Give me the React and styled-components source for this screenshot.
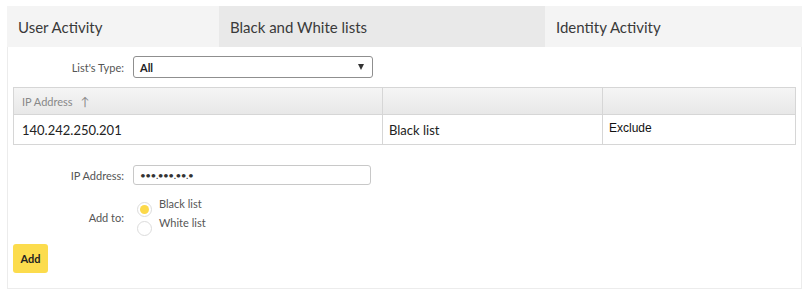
import React from "react";
import styled, { createGlobalStyle } from "styled-components";

const Global = createGlobalStyle`
  html, body { margin: 0; padding: 0; background: #fff; }
  body { font-family: Lato, "Noto Sans", sans-serif; }
  *, *::before, *::after { box-sizing: border-box; }
`;

const Page = styled.div`
  padding: 6px 4px 0 7px;
  width: 806px;
`;

const Tabs = styled.div`
  display: grid;
  grid-template-columns: 212px 326px 1fr;
  height: 41px;
`;

const Tab = styled.div`
  display: flex;
  align-items: center;
  padding-left: 11px;
  background: ${(p) => (p.$active ? "#e9e9e9" : "#f4f4f4")};
  color: #3a3a3a;
  font-size: 15px;
`;

const Panel = styled.div`
  border: 1px solid #ececec;
  border-top: none;
  padding: 9px 5px 15px 5px;
`;

const FieldRow = styled.div`
  display: grid;
  grid-template-columns: 111px 1fr;
  column-gap: 9px;
  align-items: center;
  margin-top: ${(p) => p.$mt || 0}px;
`;

const Label = styled.label`
  text-align: right;
  font-size: 11px;
  color: #555;
`;

const Select = styled.div`
  width: 240px;
  height: 22px;
  border: 1px solid #8f8f8f;
  border-radius: 3px;
  display: flex;
  align-items: center;
  justify-content: space-between;
  padding: 0 6px;
  font-size: 11px;
  font-weight: bold;
  color: #222;
`;

const Caret = styled.span`
  width: 0;
  height: 0;
  border-left: 3.5px solid transparent;
  border-right: 3.5px solid transparent;
  border-top: 6px solid #333;
  margin-right: 2px;
`;

const Table = styled.div`
  margin-top: 9px;
  border: 1px solid #d6d6d6;
  display: grid;
  grid-template-columns: 368px 220px 1fr;
`;

const HeadCell = styled.div`
  height: 27px;
  display: flex;
  align-items: center;
  padding-left: 8px;
  background: linear-gradient(#f5f5f5, #e8e8e8);
  border-left: ${(p) => (p.$first ? "none" : "1px solid #d6d6d6")};
  border-bottom: 1px solid #d6d6d6;
  font-size: 11px;
  color: #888;
  gap: 8px;
`;

const Arrow = styled.span`
  font-size: 12px;
`;

const Cell = styled.div`
  height: 29px;
  display: flex;
  align-items: center;
  padding-left: ${(p) => (p.$first ? "8px" : "6px")};
  padding-bottom: ${(p) => (p.$arial ? "3px" : "0")};
  border-left: ${(p) => (p.$first ? "none" : "1px solid #d6d6d6")};
  font-size: ${(p) => (p.$arial ? "12px" : "13px")};
  color: ${(p) => (p.$arial ? "#111" : "#222")};
  font-family: ${(p) => (p.$arial ? '"Liberation Sans", Arial, sans-serif' : "inherit")};
`;

const TextInput = styled.div`
  width: 238px;
  height: 20px;
  border: 1px solid #c8c8c8;
  border-radius: 3px;
  display: flex;
  align-items: center;
  padding-left: 6px;
  font-size: 10px;
  letter-spacing: -0.5px;
  color: #333;
`;

const Radios = styled.div`
  display: flex;
  flex-direction: column;
  gap: 4px;
  margin-left: 4px;
`;

const RadioRow = styled.div`
  display: flex;
  align-items: flex-start;
  gap: 7px;
  height: 15px;
`;

const Circle = styled.span`
  width: 15px;
  height: 15px;
  border-radius: 50%;
  border: 1px solid #dcdcdc;
  display: flex;
  align-items: center;
  justify-content: center;
  margin-top: 2px;
  &::after {
    content: "";
    width: 9px;
    height: 9px;
    border-radius: 50%;
    background: ${(p) => (p.$on ? "#fcd94a" : "transparent")};
  }
`;

const RadioText = styled.span`
  font-size: 11px;
  color: #555;
  line-height: 11px;
  margin-top: -2px;
`;

const AddButton = styled.button`
  margin-top: 10px;
  width: 35px;
  height: 29px;
  background: #fcdc4d;
  border: none;
  border-radius: 3px;
  font-family: inherit;
  font-size: 11px;
  font-weight: bold;
  color: #222;
  padding: 0;
  display: block;
`;

export default function App() {
  return (
    <>
      <Global />
      <Page>
        <Tabs>
          <Tab>User Activity</Tab>
          <Tab $active>Black and White lists</Tab>
          <Tab>Identity Activity</Tab>
        </Tabs>
        <Panel>
          <FieldRow>
            <Label>List's Type:</Label>
            <Select>
              <span>All</span>
              <Caret />
            </Select>
          </FieldRow>
          <Table>
            <HeadCell $first>
              IP Address <Arrow>↑</Arrow>
            </HeadCell>
            <HeadCell />
            <HeadCell />
            <Cell $first>140.242.250.201</Cell>
            <Cell>Black list</Cell>
            <Cell $arial>Exclude</Cell>
          </Table>
          <FieldRow $mt={20}>
            <Label>IP Address:</Label>
            <TextInput>•••.•••.••.•</TextInput>
          </FieldRow>
          <FieldRow $mt={15}>
            <Label>Add to:</Label>
            <Radios>
              <RadioRow>
                <Circle $on />
                <RadioText>Black list</RadioText>
              </RadioRow>
              <RadioRow>
                <Circle />
                <RadioText>White list</RadioText>
              </RadioRow>
            </Radios>
          </FieldRow>
          <AddButton>Add</AddButton>
        </Panel>
      </Page>
    </>
  );
}
